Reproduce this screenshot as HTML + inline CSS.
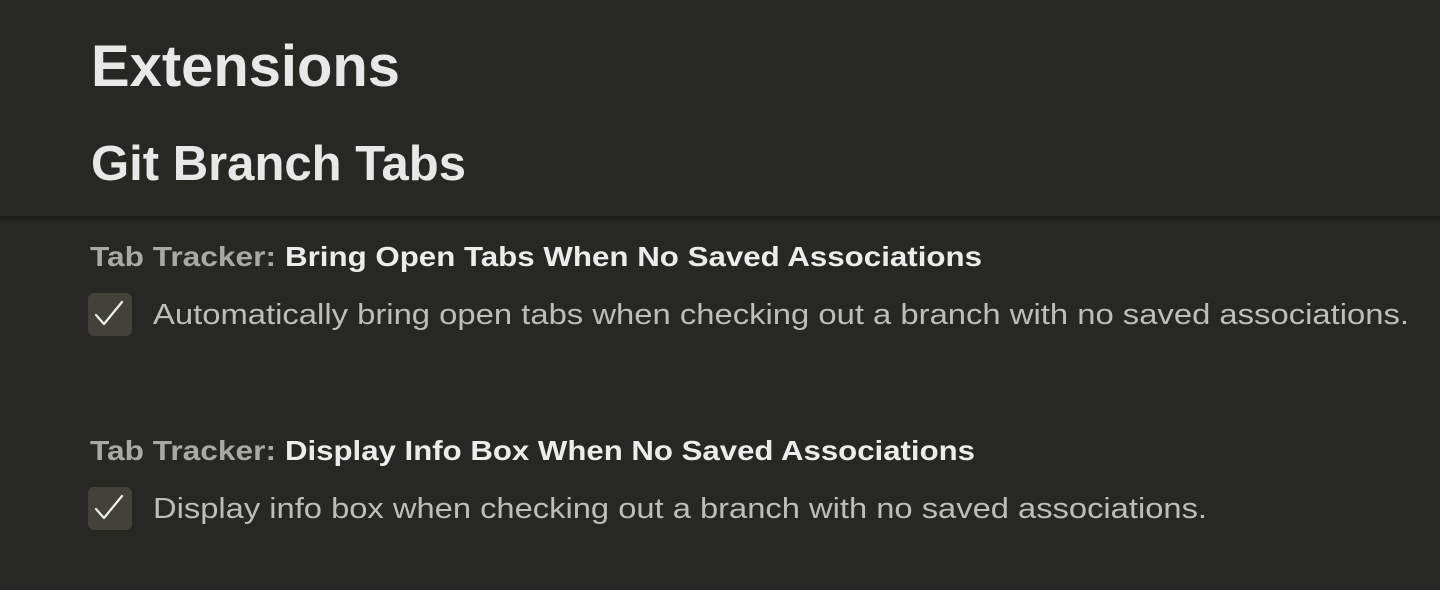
<!DOCTYPE html>
<html><head><meta charset="utf-8"><style>
html,body{margin:0;padding:0;background:#272724;width:1440px;height:590px;overflow:hidden}
svg{display:block}
</style></head><body>
<svg width="1440" height="590" xmlns="http://www.w3.org/2000/svg" font-family="Liberation Sans, sans-serif">
<defs><linearGradient id="sh" x1="0" y1="0" x2="0" y2="1"><stop offset="0" stop-color="#1a1a18"/><stop offset="1" stop-color="#272724"/></linearGradient></defs>
<rect width="1440" height="590" fill="#272724"/>
<rect y="216" width="1440" height="7" fill="url(#sh)"/>
<text x="91" y="86" font-size="58" font-weight="bold" fill="#e8e8e8" textLength="309" lengthAdjust="spacingAndGlyphs">Extensions</text>
<text x="91" y="180" font-size="49" font-weight="bold" fill="#e8e8e8" textLength="375" lengthAdjust="spacingAndGlyphs">Git Branch Tabs</text>

<text x="90" y="266" font-size="28" font-weight="bold" fill="#a8a8a5" textLength="186" lengthAdjust="spacingAndGlyphs">Tab Tracker:</text>
<text x="285" y="266" font-size="28" font-weight="bold" fill="#ececec" textLength="697" lengthAdjust="spacingAndGlyphs">Bring Open Tabs When No Saved Associations</text>
<rect x="88" y="293" width="44" height="43" rx="6" fill="#42423b"/>
<path d="M96 315 L104 324 L122 302" stroke="#f0f0f0" stroke-width="2.2" fill="none" stroke-linecap="round" stroke-linejoin="round"/>
<text x="153" y="324" font-size="29" fill="#bdbdba" textLength="1256" lengthAdjust="spacingAndGlyphs">Automatically bring open tabs when checking out a branch with no saved associations.</text>

<text x="90" y="460" font-size="28" font-weight="bold" fill="#a8a8a5" textLength="186" lengthAdjust="spacingAndGlyphs">Tab Tracker:</text>
<text x="285" y="460" font-size="28" font-weight="bold" fill="#ececec" textLength="690" lengthAdjust="spacingAndGlyphs">Display Info Box When No Saved Associations</text>
<rect x="88" y="487" width="44" height="43" rx="6" fill="#42423b"/>
<path d="M96 509 L104 518 L122 496" stroke="#f0f0f0" stroke-width="2.2" fill="none" stroke-linecap="round" stroke-linejoin="round"/>
<text x="153" y="518" font-size="29" fill="#bdbdba" textLength="1054" lengthAdjust="spacingAndGlyphs">Display info box when checking out a branch with no saved associations.</text>
</svg>
</body></html>
